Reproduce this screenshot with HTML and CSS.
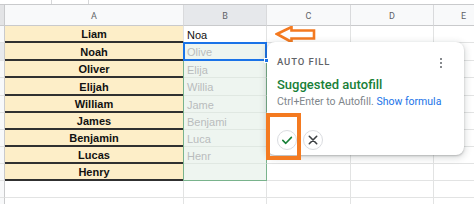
FILE: index.html
```html
<!DOCTYPE html>
<html>
<head>
<meta charset="utf-8">
<link rel="stylesheet" href="styles.css">
</head>
<body>
<div class="page">
  <div class="topbar">
    <span class="sep sep1"></span>
    <span class="sep sep2"></span>
  </div>
  <div class="sheet">
    <div class="g gh"></div><div class="h">A</div><div class="h hsel">B</div><div class="h">C</div><div class="h">D</div><div class="h">E</div>

    <div class="g"></div><div class="a">Liam</div><div class="b">Noa</div><div class="c"></div><div class="c"></div><div class="c"></div>
    <div class="g gsel"></div><div class="a">Noah</div><div class="b sug sel"><span class="ghost">Olive</span><span class="handle"></span></div><div class="c"></div><div class="c"></div><div class="c"></div>
    <div class="g"></div><div class="a">Oliver</div><div class="b sug"><span class="ghost">Elija</span></div><div class="c"></div><div class="c"></div><div class="c"></div>
    <div class="g"></div><div class="a">Elijah</div><div class="b sug"><span class="ghost">Willia</span></div><div class="c"></div><div class="c"></div><div class="c"></div>
    <div class="g"></div><div class="a">William</div><div class="b sug"><span class="ghost">Jame</span></div><div class="c"></div><div class="c"></div><div class="c"></div>
    <div class="g"></div><div class="a">James</div><div class="b sug"><span class="ghost">Benjami</span></div><div class="c"></div><div class="c"></div><div class="c"></div>
    <div class="g"></div><div class="a">Benjamin</div><div class="b sug"><span class="ghost">Luca</span></div><div class="c"></div><div class="c"></div><div class="c"></div>
    <div class="g"></div><div class="a">Lucas</div><div class="b sug"><span class="ghost">Henr</span></div><div class="c"></div><div class="c"></div><div class="c"></div>
    <div class="g"></div><div class="a">Henry</div><div class="b sug last"></div><div class="c"></div><div class="c"></div><div class="c"></div>
    <div class="g"></div><div class="c"></div><div class="c"></div><div class="c"></div><div class="c"></div><div class="c"></div>
    <div class="g"></div><div class="c"></div><div class="c"></div><div class="c"></div><div class="c"></div><div class="c"></div>
  </div>

  <svg class="arrow" width="44" height="20" viewBox="0 0 44 20">
    <polygon points="2,8 16.5,1 16.5,4.5 39,4.5 39,12.5 16.5,12.5 16.5,16" fill="#fff" stroke="#f47a20" stroke-width="2.6" stroke-linejoin="miter"/>
  </svg>

  <div class="card">
    <div class="card-head">
      <span class="card-title">AUTO FILL</span>
      <span class="dots"><i></i><i></i><i></i></span>
    </div>
    <div class="card-main">Suggested autofill</div>
    <div class="card-sub">Ctrl+Enter to Autofill. <span class="link">Show formula</span></div>
    <div class="card-actions">
      <span class="btn">
        <svg width="20" height="20" viewBox="0 0 20 20"><polyline points="5.8,10.4 8.8,13.3 14.4,7.4" fill="none" stroke="#188038" stroke-width="1.6" stroke-linecap="round" stroke-linejoin="round"/></svg>
      </span>
      <span class="btn">
        <svg width="20" height="20" viewBox="0 0 20 20"><path d="M6.3 6.3 L13.7 13.7 M13.7 6.3 L6.3 13.7" fill="none" stroke="#3c4043" stroke-width="1.6" stroke-linecap="round"/></svg>
      </span>
    </div>
  </div>

  <div class="highlight"></div>
</div>
</body>
</html>
```

FILE: styles.css
```css
html, body {
  margin: 0;
  padding: 0;
  background: #fff;
}
body {
  width: 474px;
  height: 204px;
  overflow: hidden;
  font-family: "Liberation Sans", Arial, sans-serif;
}
.page {
  position: relative;
  width: 474px;
  height: 204px;
  overflow: hidden;
}
.topbar {
  position: relative;
  height: 4px;
  border-bottom: 1px solid #c9cacc;
}
.sep {
  position: absolute;
  top: 0;
  width: 1px;
  height: 4px;
  background: #d6d7d9;
}
.sep1 { left: 51px; }
.sep2 { left: 88px; }

.sheet {
  display: grid;
  grid-template-columns: 5px 179px 83px 84px 83px 60px;
  grid-template-rows: 21px 17px 18px 17px 18px 17px 17px 17px 17px 17px 17px 17px;
  width: 494px;
}
.sheet > div {
  box-sizing: border-box;
  border-right: 1px solid #e2e3e3;
  border-bottom: 1px solid #e2e3e3;
}
.g {
  background: #f8f9fa;
  border-right-color: #c9cacc !important;
}
.gh {
  background: #e3e4e6;
  border-bottom-color: #c9cacc !important;
}
.gsel { background: #e8eaed; }
.h {
  background: #f8f9fa;
  border-bottom-color: #c9cacc !important;
  border-right-color: #d9dadc !important;
  font-family: Roboto, "Liberation Sans", sans-serif;
  font-size: 9px;
  color: #5f6368;
  display: flex;
  align-items: center;
  justify-content: center;
  padding-top: 1px;
}
.hsel { background: #e6e8eb; }
.a {
  background: #fdeec8;
  border-bottom: 2px solid #303030 !important;
  font-size: 11px;
  font-weight: bold;
  color: #111;
  display: flex;
  align-items: center;
  justify-content: center;
  padding-top: 1px;
}
.b {
  font-size: 11px;
  color: #111;
  display: flex;
  align-items: center;
  padding-left: 3px;
  padding-top: 1px;
}
.sug {
  background: #eef5f0;
  border-right-color: #79b38c !important;
  border-bottom-color: #e0e8e2 !important;
  box-shadow: -1px 0 0 #79b38c;
}
.sug.last { border-bottom-color: #79b38c !important; }
.ghost { color: #b9bcbd; }
.sel { position: relative; }
.sel::after {
  content: "";
  position: absolute;
  left: -1px;
  top: -1px;
  right: -1px;
  bottom: -1px;
  border: 2px solid #1a73e8;
}
.handle {
  position: absolute;
  right: -3px;
  bottom: -3px;
  width: 5px;
  height: 5px;
  background: #1a73e8;
  border: 1px solid #fff;
  box-sizing: border-box;
  z-index: 2;
}

.arrow {
  position: absolute;
  left: 275px;
  top: 26px;
}

.card {
  position: absolute;
  left: 267px;
  top: 42px;
  width: 197px;
  height: 113px;
  box-sizing: border-box;
  background: #fff;
  border-radius: 8px;
  box-shadow: 0 1px 2px rgba(60,64,67,0.3), 0 2px 6px 2px rgba(60,64,67,0.15);
  padding: 14px 10px 0 10px;
  font-family: Roboto, "Liberation Sans", sans-serif;
  display: flex;
  flex-direction: column;
}
.card-head {
  display: flex;
  justify-content: space-between;
  align-items: center;
  height: 12px;
}
.card-title {
  font-size: 9.5px;
  font-weight: 500;
  letter-spacing: 0.9px;
  color: #5f6368;
  line-height: 12px;
}
.dots {
  display: flex;
  flex-direction: column;
  gap: 1.5px;
  margin-right: 12px;
  margin-top: 2px;
}
.dots i {
  display: block;
  width: 2.5px;
  height: 2.5px;
  border-radius: 50%;
  background: #5f6368;
}
.card-main {
  margin-top: 9px;
  font-size: 13px;
  font-weight: 500;
  line-height: 16px;
  color: #188038;
}
.card-sub {
  margin-top: 2px;
  font-size: 10.5px;
  line-height: 13px;
  color: #80868b;
}
.link { color: #1a73e8; }
.card-actions {
  display: flex;
  gap: 6px;
  margin-top: 22px;
}
.btn {
  width: 20px;
  height: 20px;
  box-sizing: border-box;
  border: 1px solid #dadce0;
  border-radius: 50%;
  display: flex;
  align-items: center;
  justify-content: center;
}
.btn svg { flex: none; }

.highlight {
  position: absolute;
  left: 266px;
  top: 113px;
  width: 35px;
  height: 47px;
  box-sizing: border-box;
  border: 4px solid #f47a20;
}
```
